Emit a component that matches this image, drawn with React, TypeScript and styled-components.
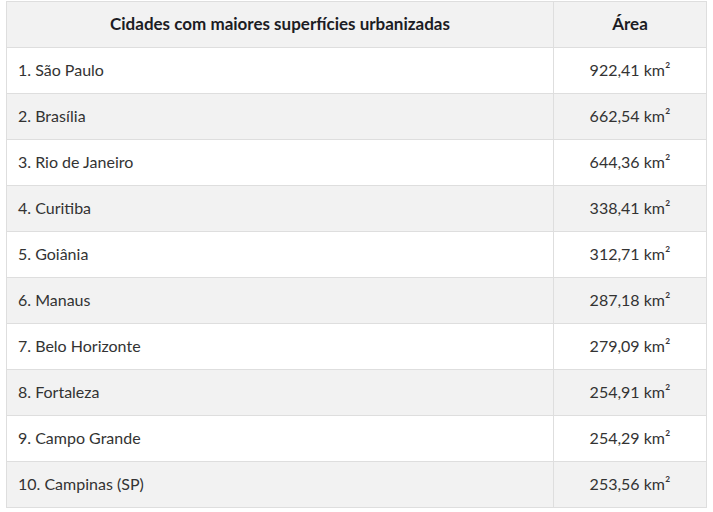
import React, { FC } from "react";
import styled, { createGlobalStyle } from "styled-components";

// Local Data
const cities: { name: string; area: string }[] = [
  { name: "1. São Paulo", area: "922,41 km²" },
  { name: "2. Brasília", area: "662,54 km²" },
  { name: "3. Rio de Janeiro", area: "644,36 km²" },
  { name: "4. Curitiba", area: "338,41 km²" },
  { name: "5. Goiânia", area: "312,71 km²" },
  { name: "6. Manaus", area: "287,18 km²" },
  { name: "7. Belo Horizonte", area: "279,09 km²" },
  { name: "8. Fortaleza", area: "254,91 km²" },
  { name: "9. Campo Grande", area: "254,29 km²" },
  { name: "10. Campinas (SP)", area: "253,56 km²" },
];

const App: FC = () => {
  return (
    <>
      <GlobalStyle />
      <Wrapper>
        <Table>
          <colgroup>
            <col style={{ width: 547 }} />
            <col style={{ width: 153 }} />
          </colgroup>
          <thead>
            <tr>
              <HeadCell>Cidades com maiores superfícies urbanizadas</HeadCell>
              <HeadCell>Área</HeadCell>
            </tr>
          </thead>
          <tbody>
            {cities.map((city) => (
              <Row key={city.name}>
                <Cell>{city.name}</Cell>
                <Cell $center>{city.area}</Cell>
              </Row>
            ))}
          </tbody>
        </Table>
      </Wrapper>
    </>
  );
};

const GlobalStyle = createGlobalStyle`
  body {
    margin: 0;
    background: #ffffff;
    font-family: Lato, "Noto Sans", sans-serif;
  }
`;

export const Wrapper = styled.section`
  padding: 1px 0 0 6px;
`;

const Table = styled.table`
  width: 700px;
  border-collapse: collapse;
  table-layout: fixed;
  font-size: 16px;
  color: #333333;
`;

const HeadCell = styled.th`
  height: 46px;
  padding: 0 11px 3px;
  box-sizing: border-box;
  background: #f2f2f2;
  border: 1px solid #dedede;
  font-weight: 700;
  font-size: 17px;
  color: #1c1c24;
  text-align: center;
`;

const Row = styled.tr`
  &:nth-child(even) td {
    background: #f2f2f2;
  }
`;

const Cell = styled.td<{ $center?: boolean }>`
  height: 46px;
  padding: 0 11px 3px;
  box-sizing: border-box;
  background: #ffffff;
  border: 1px solid #dedede;
  text-align: ${(props) => (props.$center ? "center" : "left")};
`;

export default App;
